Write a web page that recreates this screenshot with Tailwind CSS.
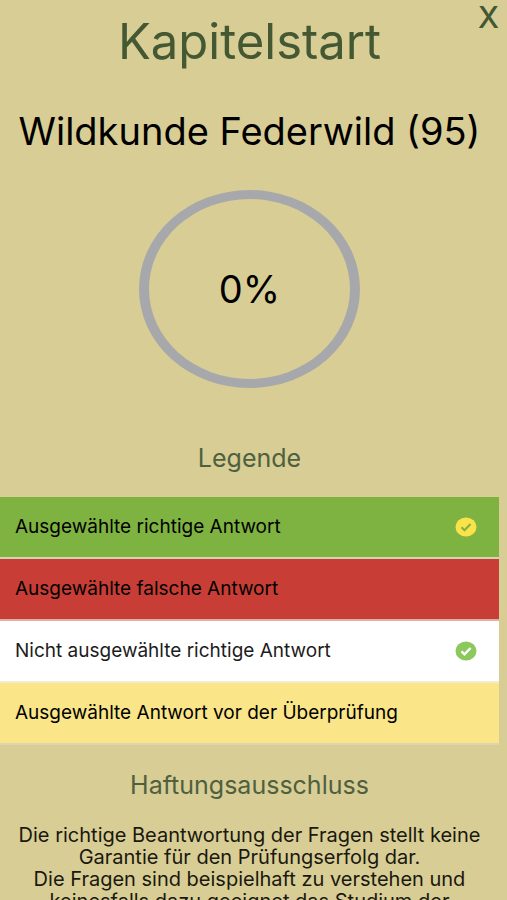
<!DOCTYPE html>
<html lang="de">
<head>
    <meta charset="UTF-8">
    <meta name="viewport" content="width=device-width, initial-scale=1.0">
    <title>Kapitelstart</title>
    <script src="https://cdn.jsdelivr.net/npm/@tailwindcss/browser@4"></script>
</head>
<body class="relative h-screen overflow-hidden bg-[#d8cd94] pr-2 font-[Inter,sans-serif] text-black">
    <button type="button" aria-label="Schließen" class="absolute top-0 right-2 text-3xl leading-[34px] font-medium text-[#445834]">X</button>

    <header class="pt-3 text-center">
        <h1 class="text-[49px] leading-[60px] text-[#445834]">Kapitelstart</h1>
        <h2 class="mt-[35px] text-[38px] leading-[48px] whitespace-nowrap">Wildkunde Federwild (95)</h2>
    </header>

    <main>
        <!-- Fortschritt -->
        <div class="relative mx-auto mt-[35px] flex h-[198px] w-[221px] items-center justify-center">
            <svg class="absolute inset-0 h-full w-full" viewBox="0 0 221 198" preserveAspectRatio="none" aria-hidden="true">
                <path fill="#a7a8ab" fill-rule="evenodd" d="M0 99a110.500 99 0 1 0 221 0a110.500 99 0 1 0 -221 0zM10 99a100.500 90 0 1 0 201 0a100.500 90 0 1 0 -201 0z" />
            </svg>
            <span class="text-[38px]">0%</span>
        </div>

        <!-- Legende -->
        <section>
            <h3 class="mt-[54px] text-center text-[25px] leading-8 text-[#4f6040]">Legende</h3>
            <ul class="mt-[23px] text-[19px]">
                <li class="flex h-[62px] items-center justify-between border-b-2 border-[#d5d2b5] bg-[#7fb341] pr-[22px] pl-[15px]">
                    Ausgewählte richtige Antwort
                    <svg class="h-5 w-[22px]" viewBox="0 0 22 20" aria-hidden="true">
                        <ellipse cx="11" cy="10" rx="10.500" ry="9.500" fill="#fbe24b" />
                        <path d="M6.500 10.300l3 3l6-6.300" fill="none" stroke="#7fb341" stroke-width="2.200" />
                    </svg>
                </li>
                <li class="flex h-[62px] items-center border-b-2 border-[#e0b0a5] bg-[#c83e36] pr-[22px] pl-[15px]">Ausgewählte falsche Antwort</li>
                <li class="flex h-[62px] items-center justify-between border-b-2 border-[#f3ecd0] bg-white pr-[22px] pl-[15px] text-[#1c1c1c]">
                    Nicht ausgewählte richtige Antwort
                    <svg class="h-5 w-[22px]" viewBox="0 0 22 20" aria-hidden="true">
                        <ellipse cx="11" cy="10" rx="10.500" ry="9.500" fill="#8cc95c" />
                        <path d="M6.500 10.300l3 3l6-6.300" fill="none" stroke="#ffffff" stroke-width="2.500" />
                    </svg>
                </li>
                <li class="flex h-[62px] items-center border-b-2 border-[#dcd5ae] bg-[#fae588] pr-[22px] pl-[15px]">Ausgewählte Antwort vor der Überprüfung</li>
            </ul>
        </section>

        <!-- Haftungsausschluss -->
        <section class="text-center">
            <h3 class="mt-6 text-[25px] leading-8 text-[#4f6040]">Haftungsausschluss</h3>
            <p class="mt-[23px] text-xl leading-[22px] whitespace-nowrap text-[#1a180f]">
                Die richtige Beantwortung der Fragen stellt keine<br>
                Garantie für den Prüfungserfolg dar.<br>
                Die Fragen sind beispielhaft zu verstehen und<br>
                keinesfalls dazu geeignet das Studium der
            </p>
        </section>
    </main>
</body>
</html>
